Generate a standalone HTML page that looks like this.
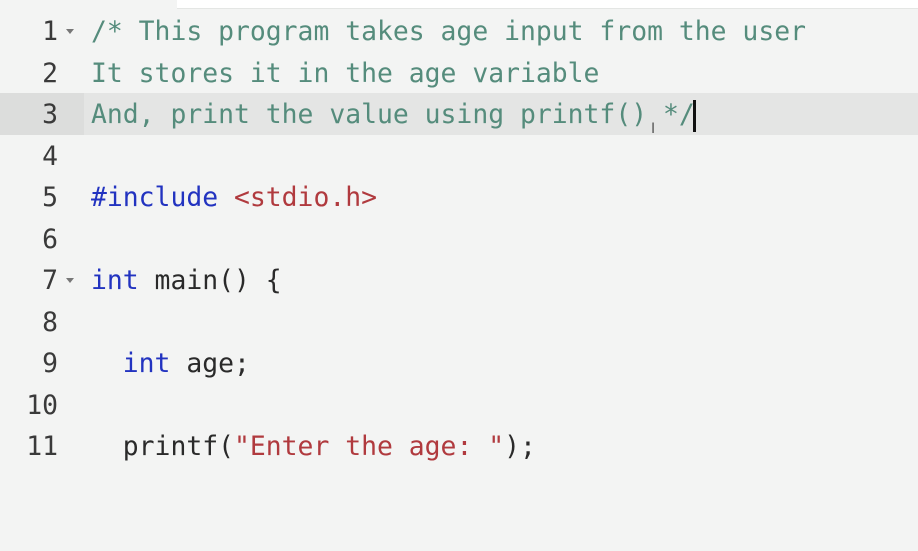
<!DOCTYPE html>
<html><head><style>
html,body{margin:0;padding:0;width:918px;height:451px;overflow:hidden;background:#f3f4f3;}
.top{position:absolute;left:177px;top:0;width:741px;height:8px;background:#fff;border-bottom:1px solid #e4e6e4;}
.hl{position:absolute;left:0;top:93px;width:918px;height:42px;background:#e4e5e4;}
.hlg{position:absolute;left:0;top:93px;width:84px;height:42px;background:#dcdddc;}
.ed{position:absolute;left:0;top:11px;font-family:"DejaVu Sans Mono","Liberation Mono",monospace;font-size:26.4px;line-height:41.5px;white-space:pre;}
.ln{position:absolute;left:0;width:58px;text-align:right;color:#3a3a3a;}
.code{position:absolute;left:91px;color:#2a2a2a;}
.c{color:#558c7c}.k{color:#2233c0}.s{color:#b03a3e}
.fold{position:absolute;left:66px;width:0;height:0;border-left:4px solid transparent;border-right:4px solid transparent;border-top:5px solid #777;}
.cur{position:absolute;left:693px;top:100px;width:3px;height:32px;background:#111;}
</style></head><body>
<div class="top"></div>
<div class="hl"></div><div class="hlg"></div>
<div class="ed">
<div class="ln" style="top:0">1</div>
<div class="ln" style="top:41.5px">2</div>
<div class="ln" style="top:83px">3</div>
<div class="ln" style="top:124.5px">4</div>
<div class="ln" style="top:166px">5</div>
<div class="ln" style="top:207.5px">6</div>
<div class="ln" style="top:249px">7</div>
<div class="ln" style="top:290.5px">8</div>
<div class="ln" style="top:332px">9</div>
<div class="ln" style="top:373.5px">10</div>
<div class="ln" style="top:415px">11</div>
<div class="code" style="top:0"><span class="c">/* This program takes age input from the user</span>
<span class="c">It stores it in the age variable</span>
<span class="c">And, print the value using printf() */</span>

<span class="k">#include</span> <span class="s">&lt;stdio.h&gt;</span>

<span class="k">int</span> main() {

  <span class="k">int</span> age;

  printf(<span class="s">"Enter the age: "</span>);</div>
</div>
<div class="fold" style="top:29px"></div>
<div class="fold" style="top:278px"></div>
<div class="cur"></div>
<div style="position:absolute;left:651px;top:121px;font:14px 'DejaVu Sans',sans-serif;color:#555;">I</div>
</body></html>
